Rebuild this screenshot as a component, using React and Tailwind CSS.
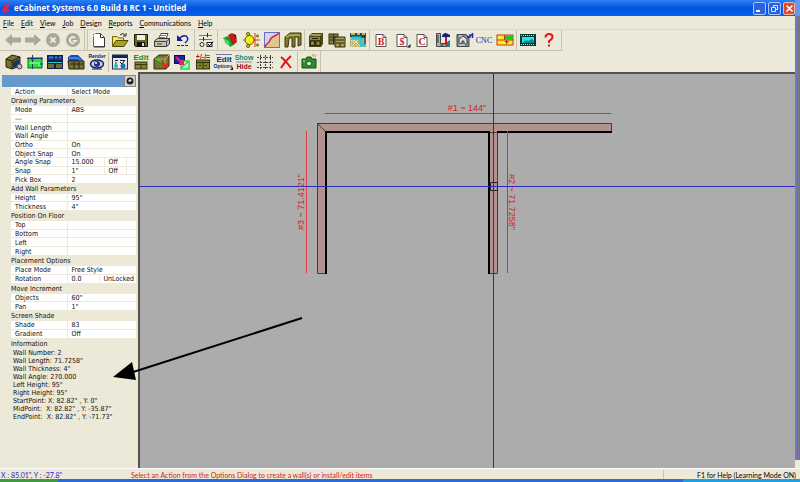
import React from "react";

/* ---------- icon drawings, each on an 18 x 16 grid ---------- */

const page = (
  <path d="M3.500 1.500H10.500L14.500 5.500V14.500H3.500Z" fill="#fff" stroke="#666" />
);

const letterPage = (letter) => (
  <>
    <path d="M4 2.500H11L14 5.500V14.500H4Z" fill="#fff" stroke="#555" />
    <path d="M11 2.500V5.500H14" fill="none" stroke="#555" />
    <text x="9" y="12.500" textAnchor="middle" fontSize="10" fontWeight="700" fill="#d41818" fontFamily="Liberation Serif, serif">
      {letter}
    </text>
  </>
);

const cabinet = (
  <>
    <path d="M2 4L5 1H16V12L14 15H2Z" fill="#4a4717" />
    <path d="M3 4L5 2H15L13 4Z" fill="#a39c4e" />
    <rect x="3" y="5" width="10" height="3" fill="#8b8440" />
    <path d="M3.500 9H7.500V13.500H3.500ZM9 9H13V13.500H9Z" fill="#8b8440" stroke="#26240a" />
    <path d="M5 6.500H11" stroke="#26240a" />
  </>
);

const art = {
  back: <path d="M1 8L8 2V5.500H17V10.500H8V14Z" fill="#aca899" />,
  forward: <path d="M17 8L10 2V5.500H1V10.500H10V14Z" fill="#aca899" />,
  stop: (
    <>
      <circle cx="9" cy="8" r="7" fill="#aca899" />
      <path d="M6.500 5.500L11.500 10.500M11.500 5.500L6.500 10.500" stroke="#ece9d8" strokeWidth="2" />
    </>
  ),
  refresh: (
    <>
      <circle cx="9" cy="8" r="7" fill="#aca899" />
      <path d="M11 6A3 3 0 1 0 10 11" fill="none" stroke="#ece9d8" strokeWidth="2" />
      <path d="M8 8H14L11 11Z" fill="#ece9d8" />
    </>
  ),
  new: (
    <>
      {page}
      <path d="M10.500 1.500V5.500H14.500" fill="none" stroke="#333" />
      <path d="M14.500 6V15H4" fill="none" stroke="#333" />
      <path d="M2 0L4 2M5 0V3M1 4H4" stroke="#fff" />
    </>
  ),
  open: (
    <>
      <path d="M1.500 14V4.500H6L7.500 6H12.500V8" fill="#f2e86a" stroke="#6b6500" />
      <path d="M1.500 14.500L5 8.500H17L13 14.500Z" fill="#a8a028" stroke="#4f4a00" />
      <path d="M9 3Q12 0 14 3M15 1V4H12" fill="none" stroke="#222" />
    </>
  ),
  save: (
    <>
      <path d="M2.500 2.500H15.500V14.500H3.500L2.500 13.500Z" fill="#6c6a18" stroke="#16150a" />
      <rect x="5" y="3" width="8" height="5" fill="#eeeede" />
      <rect x="5" y="10" width="8" height="5" fill="#111" />
      <rect x="10" y="11" width="2" height="3" fill="#ddd" />
    </>
  ),
  print: (
    <>
      <path d="M5.500 7L8 1.500H15L13 7Z" fill="#fff" stroke="#444" />
      <path d="M8 3.500H13M7 5.500H12" stroke="#777" />
      <path d="M1.500 9L4.500 6.500H16.500V12L13.500 14.500H1.500Z" fill="#c4c2b8" stroke="#333" />
      <path d="M1.500 9.500H13.500L16.500 7M13.500 10V14" fill="none" stroke="#444" />
      <path d="M4 12H9" stroke="#8b8c18" strokeWidth="2" />
    </>
  ),
  undo: (
    <>
      <path d="M5 7Q8 3 12 4Q16 7 11 11" fill="none" stroke="#10209a" strokeWidth="1.500" />
      <path d="M3 3V9H9Z" fill="#10209a" />
      <path d="M3 13.500H15" stroke="#10209a" strokeDasharray="3 1" />
    </>
  ),
  sliders: (
    <>
      <path d="M2 3.500H15M2 7.500H15" stroke="#777" />
      <path d="M10.500 1V5M6.500 5V9" stroke="#222" />
      <circle cx="5" cy="12.500" r="2" fill="#fff" stroke="#222" />
      <rect x="10" y="10.500" width="5" height="4" fill="#fff" stroke="#222" />
      <path d="M11 12L12.500 14L16 9.500" fill="none" stroke="#000" />
    </>
  ),
  swatches: (
    <>
      <path d="M2 6L7 4L14 12L9 15Z" fill="#119c29" />
      <path d="M3 6L8 9L9 14L4 11Z" fill="#48d55a" />
      <path d="M7 3L11 1L16 10L12 13Z" fill="#cc1616" />
      <path d="M11 1L15 3L16 10Z" fill="#700b0b" />
    </>
  ),
  balloon: (
    <>
      <path d="M1 8H18M13 1V15" stroke="#e23a1a" />
      <circle cx="7.500" cy="8" r="4.500" fill="#f5ef12" stroke="#5c5600" />
      <circle cx="6" cy="2" r="1.500" fill="#e8df29" stroke="#5c5600" />
      <circle cx="6" cy="14" r="1.500" fill="#e8df29" stroke="#5c5600" />
      <circle cx="15.500" cy="4" r="1" fill="#e8df29" stroke="#5c5600" />
      <circle cx="15.500" cy="13" r="1" fill="#e8df29" stroke="#5c5600" />
    </>
  ),
  curve: (
    <>
      <rect x="1.500" y=".5" width="15" height="15" fill="#d3d5ee" stroke="#6370c9" />
      <path d="M2 15C3 11 6 12 7 8C8 4 12 5 16 1V15Z" fill="#e6c58d" />
      <path d="M2 15C3 11 6 12 7 8C8 4 12 5 16 1" fill="none" stroke="#cc2647" strokeWidth="1.500" />
    </>
  ),
  door: (
    <>
      <path d="M1 5L6 1H17V13L14 14V5H11V15H8V6H5L4 15H1Z" fill="#817b28" stroke="#3b380c" />
      <path d="M2 5L6 3H16" fill="none" stroke="#d4cd6c" />
    </>
  ),
  cabinet,
  cabinets: (
    <>
      <rect x="1" y="2" width="9" height="10" fill="#858044" stroke="#302e0c" />
      <path d="M2 5H9M2 8H9M5.500 2V12" stroke="#302e0c" />
      <path d="M7 5H17V15H7Z" fill="#a29c54" stroke="#302e0c" />
      <path d="M8 8H16M8 11H16M12 11V15" stroke="#302e0c" />
    </>
  ),
  room: (
    <>
      <rect x="1" y="1" width="16" height="14" fill="#b7b06a" />
      <path d="M1 1H17V5H1Z" fill="#1d4e54" />
      <path d="M2 2H6M8 2H11M13 2H16" stroke="#c4b54e" strokeWidth="2" />
      <path d="M3 6H12V13H17" fill="none" stroke="#23c9dc" strokeWidth="3" />
      <path d="M2 8L9 15M5 8L11 14M2 12L5 15M9 8L2 15M5 8L2 11" stroke="#efe9b1" />
      <path d="M12 5H16V12" fill="none" stroke="#111" />
    </>
  ),
  bid: letterPage("B"),
  price: (
    <>
      {letterPage("$")}
      <path d="M17.500 12V15.500H14Z" fill="#111" />
    </>
  ),
  cut: letterPage("C"),
  measure: (
    <>
      <path d="M6 15L16 8V15Z" fill="#2b7e86" />
      <path d="M2.500 1.500H6.500V11.500H12.500V14.500H2.500Z" fill="#aeb4b6" stroke="#454545" />
      <path d="M3 4H5M3 6H5M3 8H5M3 10H5M7 12V14M9 12V14" stroke="#333" />
      <path d="M8 4Q9 1 12 1L16 3V5H8Z" fill="#14208a" />
      <rect x="11" y="5" width="2" height="8" fill="#b61b25" />
    </>
  ),
  sheet: (
    <>
      <path d="M2 2.500H11L14 5V14.500H2Z" fill="#8a8d90" stroke="#45474a" />
      <path d="M4 11V7L8 4L12 7V12H9V9H7V12Z" fill="#dedede" stroke="#45474a" />
      <path d="M4 4H7M4 13H10" stroke="#eee" />
      <path d="M12 5H15V3H18M17.500 1V6" fill="none" stroke="#1824b0" strokeWidth="1.500" />
    </>
  ),
  cnc: (
    <text x="9" y="11" textAnchor="middle" fontSize="8" fill="#2525a4" fontFamily="Liberation Serif, serif">
      CNC
    </text>
  ),
  nest: (
    <>
      <rect x="1" y="3" width="16" height="10" fill="#f7ee29" stroke="#d42e17" />
      <rect x="9" y="3.500" width="8" height="4" fill="#15cd23" />
      <path d="M1 8H17M8.500 3V8M10.500 8V12" stroke="#d42e17" />
      <path d="M8 9H13L11 11Z" fill="#555" />
    </>
  ),
  film: (
    <>
      <rect x="1" y="2" width="16" height="12" fill="#08383a" />
      <path d="M2 3.500H16M2 12.500H16" stroke="#8af4ef" strokeDasharray="1 1" />
      <rect x="3" y="5" width="12" height="6" fill="#28e6e1" />
      <path d="M3 11L7 8L9 9L13 7L15 9V11Z" fill="#118a88" />
    </>
  ),
  help: (
    <>
      <path d="M5.500 5.500Q5.500 2 9 2Q12.500 2 12.500 5Q12.500 7 9 9V11" fill="none" stroke="#e01818" strokeWidth="2" />
      <rect x="8" y="12.500" width="2" height="2" fill="#e01818" />
    </>
  ),
  cabinetGear: (
    <>
      <path d="M1 5L7 1L15 3V12L7 15L1 13Z" fill="#77722c" stroke="#232208" />
      <path d="M1 5L7 7V15M7 7L15 3" fill="none" stroke="#232208" />
      <path d="M8 8L14 5V11L8 14Z" fill="#17306f" />
      <circle cx="14.500" cy="12.500" r="2.500" fill="#b4bac3" stroke="#445" />
    </>
  ),
  plan: (
    <>
      <rect x="2" y="4" width="14" height="10" fill="#27df40" stroke="#0e6a20" />
      <path d="M1 4.500H17M6.500 1V15M12 10H17" stroke="#123e4e" />
      <path d="M3 9H13V12" fill="none" stroke="#69f27b" strokeWidth="2" />
      <circle cx="6.500" cy="4.500" r="1.500" fill="#2637b5" />
      <circle cx="15" cy="4.500" r="1" fill="#2637b5" />
    </>
  ),
  elevation: (
    <>
      <rect x="1" y="1" width="16" height="14" fill="#151d49" />
      <rect x="2" y="2" width="14" height="4" fill="#16318f" />
      <path d="M3 3.500H7M9 3.500H11M13 3.500H15" stroke="#3d7cae" strokeWidth="2" />
      <path d="M2 8.500H16" stroke="#26c8cd" />
      <path d="M2 10H8V14H2ZM10 10H16V14H10Z" fill="#6e6b2e" />
    </>
  ),
  counter: (
    <>
      <path d="M1 3L4 1H11L16 6V8H1Z" fill="#1d46c5" />
      <path d="M2 4H11L15 7" fill="none" stroke="#59bce9" />
      <path d="M1 7H17V15H2Z" fill="#77722e" stroke="#292709" />
      <path d="M7 8V15M12 8V15M3 10H16" stroke="#292709" />
    </>
  ),
  render: (
    <>
      <text x="9" y="4" textAnchor="middle" fontSize="5" fontWeight="700" fill="#18206f" fontFamily="Liberation Sans, sans-serif">
        Render
      </text>
      <ellipse cx="9" cy="10" rx="6.500" ry="4" fill="#c6d3e8" stroke="#182063" strokeWidth="1.500" />
      <circle cx="9" cy="10" r="3" fill="#26308f" />
      <circle cx="8" cy="9" r="1" fill="#fff" />
      <path d="M4 15H14" stroke="#182063" />
    </>
  ),
  dialog: (
    <>
      <rect x="1.500" y="1" width="15" height="14" fill="#e5eaea" stroke="#1f2e44" />
      <rect x="2" y="1" width="14" height="3" fill="#142260" />
      <path d="M4 6.500H7M9 6.500H14M4 9H6" stroke="#222" />
      <path d="M9 8L11 10L14 6" fill="none" stroke="#111" />
      <circle cx="5" cy="12" r="2" fill="#1bb8b0" />
      <circle cx="12" cy="12" r="2.500" fill="#1e6dc5" />
    </>
  ),
  editCabinet: (
    <>
      <text x="9" y="6" textAnchor="middle" fontSize="8" fontWeight="700" fill="#158a22" fontFamily="Liberation Sans, sans-serif">
        Edit
      </text>
      <rect x="3" y="8" width="12" height="7" fill="#858032" stroke="#39370d" />
      <path d="M3 10.500H15M9 10V15" stroke="#39370d" />
    </>
  ),
  moveCabinet: (
    <>
      <path d="M1 5L6 1H16V12L13 15H1Z" fill="#777230" stroke="#333109" />
      <path d="M2 5H12V14M12 5L16 1" fill="none" stroke="#bbb45f" />
      <path d="M5 5L8 8M7 5H5V7" fill="none" stroke="#23de3c" strokeWidth="1.500" />
      <path d="M9 8L14 13M14 9V13H10" fill="none" stroke="#ef2020" strokeWidth="2" />
    </>
  ),
  swap: (
    <>
      <rect x="1.500" y="1.500" width="10" height="8" fill="#1d23ad" stroke="#09104d" />
      <rect x="8" y="7" width="8" height="8" fill="#b7f7c6" stroke="#22dc41" strokeWidth="1.500" />
      <path d="M3 3L10 10M10 6V10H6" fill="none" stroke="#e9226e" strokeWidth="2" />
      <path d="M8 14L15 8" stroke="#1c8d36" />
    </>
  ),
  mathCabinet: (
    <>
      <text x="9" y="5" textAnchor="middle" fontSize="7" fontWeight="700" fill="#a21724" fontFamily="Liberation Sans, sans-serif">
        +/-/=
      </text>
      <rect x="2.500" y="6" width="13" height="9" fill="#817c32" stroke="#343209" />
      <path d="M3 8.500H15M9 8V15M5 11.500H7M11 11.500H13" stroke="#343209" />
    </>
  ),
  editOptions: (
    <>
      <path d="M1 .5H17" stroke="#6c75a3" />
      <text x="9" y="8" textAnchor="middle" fontSize="8" fontWeight="700" fill="#161f75" fontFamily="Liberation Sans, sans-serif">
        Edit
      </text>
      <text x="8" y="14" textAnchor="middle" fontSize="5" fontWeight="700" fill="#161f75" fontFamily="Liberation Sans, sans-serif">
        Options
      </text>
      <path d="M18 13V16H15Z" fill="#111" />
    </>
  ),
  showHide: (
    <>
      <text x="9" y="6" textAnchor="middle" fontSize="7" fontWeight="700" fill="#16877b" fontFamily="Liberation Sans, sans-serif">
        Show
      </text>
      <path d="M1 8H17" stroke="#888" />
      <text x="9" y="15" textAnchor="middle" fontSize="7" fontWeight="700" fill="#8f1720" fontFamily="Liberation Sans, sans-serif">
        Hide
      </text>
    </>
  ),
  grid: (
    <path
      d="M1 3.500H17M1 8.500H17M1 13.500H17M4.500 1V16M9.500 1V16M14.500 1V16"
      stroke="#444"
      strokeDasharray="2 1"
    />
  ),
  remove: <path d="M4 3Q8 6 14 14M14 2Q8 7 4 14" fill="none" stroke="#e31414" strokeWidth="2" />,
  camera: (
    <>
      <path d="M2 5H6L7 3H11L12 5H16V14H2Z" fill="#2a8d35" stroke="#125019" />
      <circle cx="9" cy="9.500" r="2.500" fill="#d7e6c4" stroke="#125019" />
      <path d="M3 7H5" stroke="#e8f2a0" />
      <path d="M12 0L14 3M17 1L15 3M14 0V2" stroke="#e98a5a" />
    </>
  ),
};

function Tool({ name, label }) {
  return (
    <button type="button" aria-label={label} className="flex h-5 min-w-0 flex-1 items-center justify-center">
      <svg width="18" height="16" viewBox="0 0 18 16" className="shrink-0 overflow-visible" aria-hidden="true">
        {art[name]}
      </svg>
    </button>
  );
}

function Group({ width, tools }) {
  return (
    <div className={`flex items-center ${width}`}>
      {tools.map(([name, label]) => (
        <Tool key={name} name={name} label={label} />
      ))}
    </div>
  );
}

const Sep = () => <div className="mx-px h-5 w-px bg-[#c5c2b2]" />;

/* ---------- parameter panel ---------- */

function Section({ title, height, rows }) {
  return (
    <section>
      <h2 className="h-[10px] leading-[10px]">{title}</h2>
      <ParamTable height={height} rows={rows} title={title} />
    </section>
  );
}

function ParamTable({ height, rows, title }) {
  return (
    <table aria-label={title} className={`w-full table-fixed border-collapse bg-white leading-[5px] ${height}`}>
      <tbody>
        {rows.map(([name, value, extra, split]) => (
          <tr key={name} className="border-b border-[#ece9d8]">
            <th scope="row" className="w-14 border-r border-[#ece9d8] p-0 pl-1 pt-[2px] text-left font-normal">
              {name}
            </th>
            <td className="p-0">
              <div className="flex">
                <span className={`pl-1 pt-[2px] ${split || "flex-1"}`}>{value}</span>
                {extra && <span className="flex-1 border-l border-[#ece9d8] pl-1 pt-[2px]">{extra}</span>}
                {extra === "Off" && <span className="w-[10px] border-l border-[#ece9d8]" />}
              </div>
            </td>
          </tr>
        ))}
      </tbody>
    </table>
  );
}

const sections = [
  {
    title: "Drawing Parameters",
    height: "h-[78px]",
    rows: [
      ["Mode", "ABS"],
      ["---", ""],
      ["Wall Length", ""],
      ["Wall Angle", ""],
      ["Ortho", "On"],
      ["Object Snap", "On"],
      ["Angle Snap", "15.000", "Off", "w-9"],
      ["Snap", '1"', "Off", "w-9"],
      ["Pick Box", "2"],
    ],
  },
  { title: "Add Wall Parameters", height: "h-[17px]", rows: [["Height", '95"'], ["Thickness", '4"']] },
  { title: "Position On Floor", height: "h-[35px]", rows: [["Top", ""], ["Bottom", ""], ["Left", ""], ["Right", ""]] },
  {
    title: "Placement Options",
    height: "h-[18px]",
    rows: [["Place Mode", "Free Style"], ["Rotation", "0.0", "UnLocked", "w-[31px]"]],
  },
  { title: "Move Increment", height: "h-[17px]", rows: [["Objects", '60"'], ["Pan", '1"']] },
  { title: "Screen Shade", height: "h-[18px]", rows: [["Shade", "83"], ["Gradient", "Off"]] },
];

const info = [
  "Wall Number: 2",
  'Wall Length: 71.7258"',
  'Wall Thickness: 4"',
  "Wall Angle: 270.000",
  'Left Height: 95"',
  'Right Height: 95"',
  'StartPoint: X: 82.82" , Y: 0"',
  'MidPoint:  X: 82.82" , Y: -35.87"',
  'EndPoint:  X: 82.82" , Y: -71.73"',
];

function Panel() {
  return (
    <aside className="flex w-[140px] shrink-0 flex-col border-r-2 border-[#55534c] bg-[#ece9d8] pl-[2px] pr-[2px] pt-[3px] font-['DejaVu_Sans_Condensed','DejaVu_Sans',sans-serif] text-[7px] leading-[8px] text-[#111]">
      <div className="flex h-3 items-center justify-end bg-[#6699cc]">
        <button type="button" aria-label="Pin panel" className="flex h-3 w-3 items-center justify-center border border-[#888] bg-[#d4d0c8]">
          <svg width="8" height="8" viewBox="0 0 8 8" aria-hidden="true">
            <circle cx="4" cy="4" r="3.500" fill="#222" />
            <path d="M2 4L4 2L6 3L4 5Z" fill="#ddd" />
          </svg>
        </button>
      </div>
      <div className="pl-[9px]">
        <ParamTable title="Action" height="h-[9px]" rows={[["Action", "Select Mode"]]} />
        {sections.map((s) => (
          <Section key={s.title} {...s} />
        ))}
        <h2 className="h-[10px] leading-[10px]">Information</h2>
        <ul className="pl-[2px]">
          {info.map((line) => (
            <li key={line} className="whitespace-pre">
              {line}
            </li>
          ))}
        </ul>
      </div>
    </aside>
  );
}

/* ---------- wall plan ---------- */

function Plan() {
  return (
    <svg className="block h-full w-full" role="img" aria-label="Wall plan" fontFamily="Liberation Sans, sans-serif" fontSize="9">
      <g fill="#b1928c" stroke="#4b3a38">
        <path d="M177.500 49.500H471.500V58.500H186.500Z" />
        <path d="M177.500 49.500L186.500 58.500V199.500H177.500Z" />
        <path d="M349.500 58.500H357.500V199.500H349.500Z" />
      </g>
      <path d="M186 200V58H350M357 58H472M349 58V200" fill="none" stroke="#000" strokeWidth="2" />
      <path d="M350.500 108.500H357.500V116.500H350.500Z" fill="none" stroke="#222" />
      <rect x="185" y="39" width="286" height="1" fill="#f02828" />
      <rect x="166" y="57" width="1" height="142" fill="#e04040" />
      <rect x="367" y="57" width="1" height="142" fill="#f02828" />
      <rect x="353" y="0" width="1" height="100%" fill="#2020e0" />
      <rect x="0" y="112" width="100%" height="1" fill="#2a2ac0" />
      <g fill="#d82020">
        <text x="327" y="37" textAnchor="middle">#1 ~ 144"</text>
        <text transform="translate(164 128) rotate(-90)" textAnchor="middle">#3 ~ 71.4121"</text>
        <text transform="translate(369 128) rotate(90)" textAnchor="middle">#2 ~ 71.7258"</text>
      </g>
    </svg>
  );
}

const menus = ["File", "Edit", "View", "Job", "Design", "Reports", "Communications", "Help"];

export default function App() {
  return (
    <div className="relative flex h-screen flex-col overflow-hidden bg-[#ece9d8] font-[Lato,sans-serif]">
      <div className="flex min-h-0 flex-1">
        <div className="flex min-w-0 flex-1 flex-col">
          <header className="flex h-4 shrink-0 items-center bg-linear-to-b from-[#2a80f5] via-[#0453dc] to-[#0562f8]">
            <svg width="14" height="14" viewBox="0 0 14 14" aria-hidden="true">
              <path d="M4 9Q8 7 8 4Q7 2 5 5Q2 10 5 11Q7 11 9 9" fill="none" stroke="#ef2238" strokeWidth="2" />
            </svg>
            <h1 className="flex-1 whitespace-nowrap font-['Open_Sans',sans-serif] text-[8px] font-bold leading-4 text-white">
              eCabinet Systems 6.0 Build 8 RC 1 - Untitled
            </h1>
            <div className="flex gap-[2px]">
              <button type="button" aria-label="Minimize" className="flex h-[13px] w-[13px] items-end justify-start rounded-[2px] border border-[#a8c4f8] bg-[#2c62e0] p-[2px]">
                <span className="h-[2px] w-1 bg-white" />
              </button>
              <button type="button" aria-label="Restore" className="flex h-[13px] w-[13px] items-center justify-center rounded-[2px] border border-[#a8c4f8] bg-[#2c62e0]">
                <svg width="9" height="9" viewBox="0 0 9 9" fill="none" stroke="#dce8ff" aria-hidden="true">
                  <path d="M3.500 3V1.500H7.500V5.500H6M1.500 3.500H5.500V7.500H1.500Z" />
                </svg>
              </button>
              <button type="button" aria-label="Close" className="flex h-[13px] w-[12px] items-center justify-center rounded-[2px] border border-[#eeb9ae] bg-[#dc4c2c]">
                <svg width="9" height="9" viewBox="0 0 9 9" aria-hidden="true">
                  <path d="M1.500 1.500L7.500 7.500M7.500 1.500L1.500 7.500" stroke="#fff" strokeWidth="1.500" />
                </svg>
              </button>
            </div>
          </header>

          <nav aria-label="Main" className="flex h-[14px] shrink-0 items-center gap-[7px] border-b border-[#d6d6d8] pl-[3px] text-[7px] leading-[12px] text-black">
            {menus.map((m) => (
              <button key={m} type="button">
                <span className="underline">{m[0]}</span>
                {m.slice(1)}
              </button>
            ))}
          </nav>

          <div role="toolbar" aria-label="Standard" className="flex h-[21px] w-[562px] shrink-0 items-center border-b border-r border-[#c5c2b2] pl-[3px]">
            <Group width="w-[80px]" tools={[["back", "Back"], ["forward", "Forward"], ["stop", "Stop"], ["refresh", "Refresh"]]} />
            <Sep />
            <Sep />
            <Group width="w-[104px]" tools={[["new", "New"], ["open", "Open"], ["save", "Save"], ["print", "Print"], ["undo", "Undo"]]} />
            <Sep />
            <Group width="w-[20px]" tools={[["sliders", "Settings"]]} />
            <Sep />
            <Group width="w-[84px]" tools={[["swatches", "Materials"], ["balloon", "Lighting"], ["curve", "Profiles"], ["door", "Doors"]]} />
            <Sep />
            <Group width="w-[62px]" tools={[["cabinet", "Cabinet"], ["cabinets", "Cabinet library"], ["room", "Room"]]} />
            <Sep />
            <Group
              width="w-[144px]"
              tools={[["bid", "Bid"], ["price", "Pricing"], ["cut", "Cut list"], ["measure", "Measure"], ["sheet", "Sheets"], ["cnc", "CNC"], ["nest", "Nesting"]]}
            />
            <Sep />
            <Group width="w-[41px]" tools={[["film", "Videos"], ["help", "Help"]]} />
          </div>

          <div role="toolbar" aria-label="Room" className="flex h-[21px] w-[321px] shrink-0 items-center border-r border-[#c5c2b2] pl-[4px]">
            <Group
              width="w-[103px]"
              tools={[["cabinetGear", "Cabinet editor"], ["plan", "Plan view"], ["elevation", "Elevation"], ["counter", "Countertops"], ["render", "Render"]]}
            />
            <Sep />
            <Group
              width="w-[186px]"
              tools={[
                ["dialog", "Options dialog"],
                ["editCabinet", "Edit cabinet"],
                ["moveCabinet", "Move cabinet"],
                ["swap", "Swap"],
                ["mathCabinet", "Adjust cabinet"],
                ["editOptions", "Edit options"],
                ["showHide", "Show or hide"],
                ["grid", "Grid"],
                ["remove", "Delete"],
              ]}
            />
            <Sep />
            <Group width="w-[20px]" tools={[["camera", "Snapshot"]]} />
          </div>

          <div className="relative flex min-h-0 flex-1">
            <Panel />
            <main className="min-w-0 flex-1 border-t-2 border-[#55534c] bg-[#acacac]">
              <Plan />
            </main>
            <svg className="pointer-events-none absolute left-0 top-0" width="310" height="320" viewBox="0 0 310 320" aria-hidden="true">
              <path d="M302 246L130 301" stroke="#000" strokeWidth="2" />
              <path d="M113 305L132 290L136 308Z" fill="#000" />
            </svg>
          </div>
        </div>
        <div className="flex w-[5px] shrink-0 flex-col">
          <div className="h-4 bg-[#6f95e8]" />
          <div className="flex-1 border-l-2 border-[#6e78c4] bg-[#77777b]" />
          <div className="h-2 bg-[#ece9d8]" />
        </div>
      </div>

      <footer className="flex h-[11px] shrink-0 items-center border-t border-white pt-px text-[7px] leading-[10px]">
        <span className="w-[131px] pl-[1px] text-[#2424c8]">X : 85.01", Y : -27.8"</span>
        <span className="flex-1 text-[#d42020]">
          Select an Action from the Options Dialog to create a wall(s) or install/edit items
        </span>
        <span className="border-l border-[#c5c2b2] pl-[33px] pr-1 text-black">F1 for Help (Learning Mode ON)</span>
      </footer>
      <div className="flex h-[3px] shrink-0 bg-[#2a6be0]">
        <div className="w-[58px] bg-[#3f9a40]" />
        <div className="flex-1" />
        <div className="w-[117px] bg-[#1ba0e8]" />
      </div>
    </div>
  );
}
